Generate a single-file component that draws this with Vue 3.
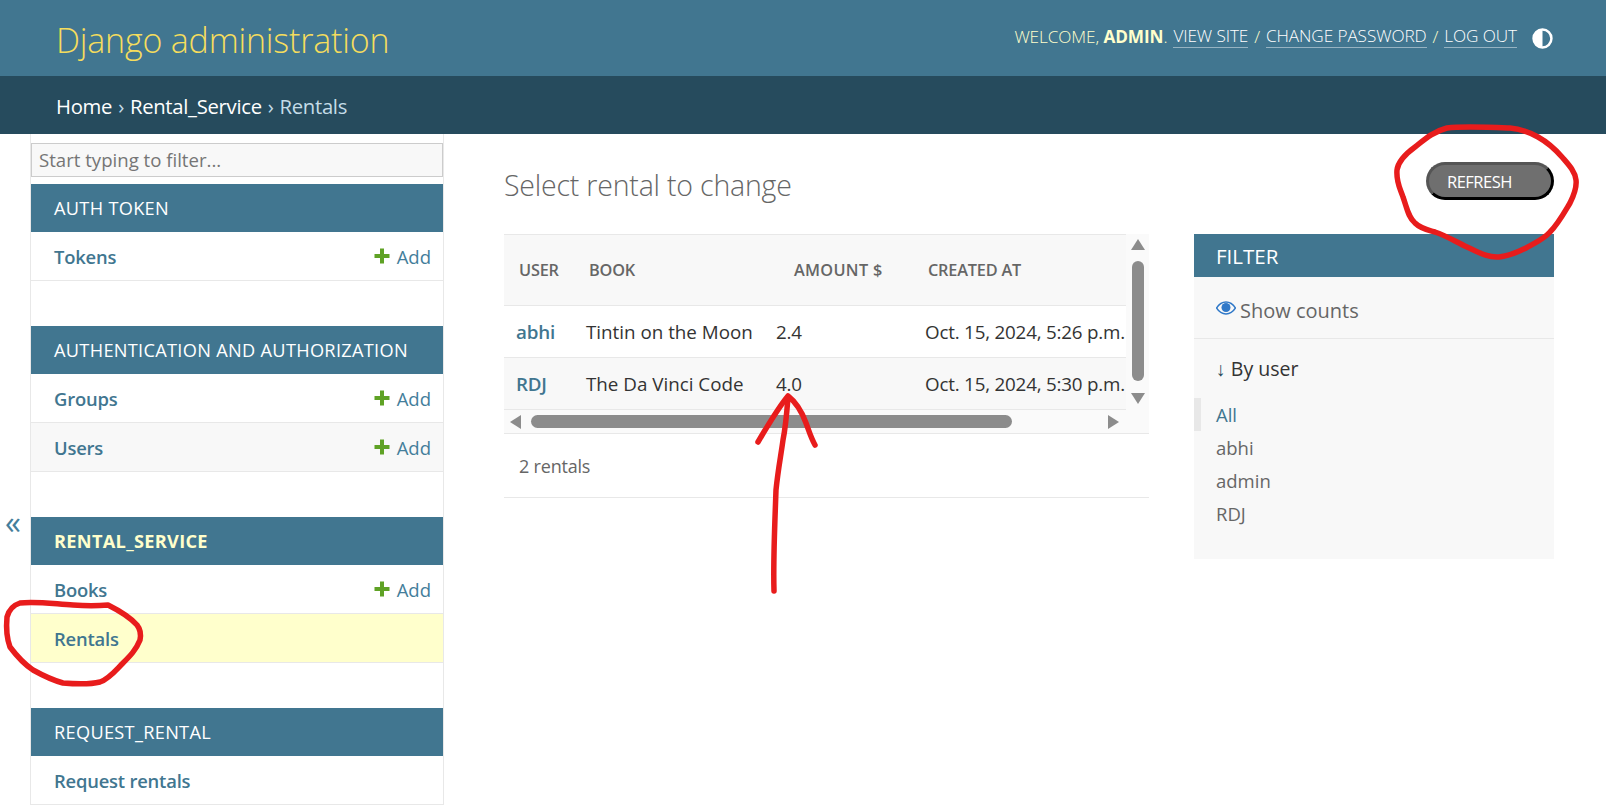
<template>
  <div class="page">
    <header class="header">
      <h1 class="brand">Django administration</h1>
      <div class="tools">
        <span class="welcome">Welcome, <strong>admin</strong>.</span>
        <a class="tool-link">View site</a>
        <span>/</span>
        <a class="tool-link">Change password</a>
        <span>/</span>
        <a class="tool-link">Log out</a>
        <svg class="theme" viewBox="0 0 20 20" width="21" height="21">
          <circle cx="10" cy="10" r="8.5" fill="none" stroke="#fff" stroke-width="2.4" />
          <path d="M10 2a8 8 0 0 0 0 16z" fill="#fff" />
        </svg>
      </div>
    </header>
    <div class="crumbs">
      <a>Home</a><span class="sep">›</span><a>Rental_Service</a><span class="sep">›</span><span class="current">Rentals</span>
    </div>

    <div class="body">
      <div class="toggle-col"><span class="toggle">«</span></div>
      <aside class="sidebar">
        <div class="filter-box">Start typing to filter...</div>
        <section v-for="app in apps" :key="app.name" class="app">
          <div class="app-title" :class="{ active: app.active }">{{ app.name }}</div>
          <div v-for="row in app.rows" :key="row.name" class="app-row" :class="{ selected: row.selected }">
            <a class="row-name">{{ row.name }}</a>
            <a v-if="row.add" class="add">
              <svg viewBox="0 0 16 16" width="16" height="16">
                <path d="M6 0.5h4v5.5h5.5v4H10v5.5H6V10H0.5V6H6z" fill="#5fa225" />
              </svg>
              Add
            </a>
          </div>
        </section>
      </aside>

      <main class="content">
        <div class="title-row">
          <h2 class="title">Select rental to change</h2>
          <button class="refresh">REFRESH</button>
        </div>
        <div class="columns">
          <div class="results">
            <div class="table-wrap">
              <div class="table">
                <div class="table-row head">
                  <div v-for="h in heads" :key="h" class="th" :class="{ amount: h === 'AMOUNT $' }">{{ h }}</div>
                </div>
                <div v-for="(r, i) in rentals" :key="r.user" class="table-row item" :class="{ alt: i === 1 }">
                  <div class="td"><a class="user-link">{{ r.user }}</a></div>
                  <div class="td book">{{ r.book }}</div>
                  <div class="td">{{ r.amount }}</div>
                  <div class="td">{{ r.created }}</div>
                </div>
              </div>
              <div class="vbar">
                <i class="tri up"></i>
                <i class="vthumb"></i>
                <i class="tri down"></i>
              </div>
              <div class="hbar">
                <i class="tri left"></i>
                <i class="hthumb"></i>
                <i class="tri right"></i>
              </div>
            </div>
            <div class="paginator">2 rentals</div>
          </div>

          <div class="filter">
            <div class="filter-head">FILTER</div>
            <div class="counts">
              <svg viewBox="0 0 20 14" width="20" height="14">
                <path d="M0.5 7C3 3 6.2 1 10 1s7 2 9.5 6c-2.5 4-5.700 6-9.500 6S3 11 0.5 7z" fill="none" stroke="#2f78c8" stroke-width="1.500" />
                <circle cx="10" cy="6.500" r="4.500" fill="#2f78c8" />
              </svg>
              <span>Show counts</span>
            </div>
            <div class="by-user"><span class="down">↓</span> By user</div>
            <div v-for="f in filters" :key="f" class="filter-item" :class="{ on: f === 'All' }">{{ f }}</div>
          </div>
        </div>
      </main>
    </div>

    <!-- hand drawn red marks on the screenshot -->
    <svg class="marks" width="1606" height="805" viewBox="0 0 1606 805" fill="none">
      <path d="M1510 128C1485 127 1462 126 1447 128C1432 132 1424 140 1415 147C1404 155 1398 162 1397 170C1396 182 1400 188 1403 197C1407 208 1408 217 1415 223C1421 229 1428 230 1435 232C1447 236 1456 242 1467 247C1478 252 1488 258 1499 257C1509 256 1518 252 1526 248C1535 243 1544 239 1550 232C1558 224 1564 213 1570 203C1574 195 1577 188 1576 180C1575 171 1568 164 1562 157C1555 149 1547 142 1538 137C1529 132 1520 129 1510 128Z" />
      <path d="M108 605C118 610 129 616 137 625C141 630 141 635 140 640C136 650 130 656 123 663C116 670 109 679 100 682C88 685 75 684 63 683C52 680 42 675 33 670C24 664 16 655 10 647C7 639 6 628 7 617C9 609 14 605 20 603C35 601 55 604 73 605C85 606 98 606 108 605Z" />
      <path d="M774 591C773 560 775 520 776 490C778 470 781 455 783 440C786 425 787 410 788 397" />
      <path d="M758 442C768 425 778 408 788 396C797 403 802 412 806 423C809 431 811 438 815 445" />
    </svg>
  </div>
</template>

<script setup>
const apps = [
  { name: 'AUTH TOKEN', rows: [{ name: 'Tokens', add: true }] },
  {
    name: 'AUTHENTICATION AND AUTHORIZATION',
    rows: [{ name: 'Groups', add: true }, { name: 'Users', add: true }]
  },
  {
    name: 'RENTAL_SERVICE',
    active: true,
    rows: [{ name: 'Books', add: true }, { name: 'Rentals', selected: true }]
  },
  { name: 'REQUEST_RENTAL', rows: [{ name: 'Request rentals' }] }
]

const heads = ['USER', 'BOOK', 'AMOUNT $', 'CREATED AT']

const rentals = [
  { user: 'abhi', book: 'Tintin on the Moon', amount: '2.4', created: 'Oct. 15, 2024, 5:26 p.m.' },
  { user: 'RDJ', book: 'The Da Vinci Code', amount: '4.0', created: 'Oct. 15, 2024, 5:30 p.m.' }
]

const filters = ['All', 'abhi', 'admin', 'RDJ']
</script>

<style>
html,
body {
  margin: 0;
  background: #fff;
  overflow: hidden;
}
</style>

<style scoped>
.page {
  position: relative;
  width: 1606px;
  height: 805px;
  overflow: hidden;
  font-family: 'Open Sans', 'Noto Sans', sans-serif;
  font-size: 18.5px;
  color: #333;
}

.header {
  height: 76px;
  background: #417690;
  display: flex;
  align-items: center;
  justify-content: space-between;
  padding: 0 53px 0 56px;
}

.brand {
  margin: 3px 0 0;
  font-size: 34px;
  font-weight: 300;
  color: #f5dd5d;
  letter-spacing: -0.2px;
}

.tools {
  display: flex;
  align-items: center;
  gap: 6px;
  font-size: 17.2px;
  font-weight: 300;
  color: #ffc;
  text-transform: uppercase;
  letter-spacing: -0.1px;
  margin-top: -4px;
}

.tools strong {
  font-weight: 700;
}

.tool-link {
  color: #fff;
  border-bottom: 1px solid rgba(255, 255, 255, 0.45);
}

.theme {
  margin-left: 9px;
  margin-top: 4px;
}

.crumbs {
  height: 58px;
  background: #264b5d;
  display: flex;
  align-items: center;
  padding: 2px 0 0 56px;
  box-sizing: border-box;
  color: #fff;
  font-size: 20.3px;
  letter-spacing: -0.3px;
}

.sep {
  margin: 0 6px;
  color: #c4dce8;
}

.current {
  color: #c4dce8;
}

.body {
  display: flex;
  height: 671px;
}

.toggle-col {
  width: 30px;
  flex: none;
  padding-top: 370px;
  text-align: center;
}

.toggle {
  color: #447e9b;
  font-size: 32px;
  line-height: 36px;
  margin-left: -4px;
  display: block;
}

.sidebar {
  flex: none;
  height: 671px;
  width: 414px;
  border-left: 1px solid #e8e8e8;
  border-right: 1px solid #e8e8e8;
  padding-top: 9px;
  box-sizing: border-box;
}

.filter-box {
  height: 34px;
  box-sizing: border-box;
  border: 1px solid #ccc;
  background: #f8f8f8;
  color: #757575;
  padding-left: 7px;
  line-height: 32px;
  font-size: 18.6px;
  margin-bottom: 7px;
}

.app {
  margin-bottom: 45px;
}

.app-title {
  height: 48px;
  background: #417690;
  color: #fff;
  display: flex;
  align-items: center;
  padding-left: 23px;
  font-size: 18.2px;
  font-weight: 400;
  letter-spacing: 0.3px;
}

.app-title.active {
  color: #ffc;
  font-weight: 700;
}

.app-row {
  height: 49px;
  box-sizing: border-box;
  display: flex;
  align-items: center;
  justify-content: space-between;
  padding: 0 12px 0 23px;
  border-bottom: 1px solid #e8e8e8;
  background: #fff;
}

.app-row + .app-row {
  background: #f8f8f8;
}

.app-row.selected {
  background: #ffc;
}

.row-name {
  color: #417690;
  font-weight: 600;
  font-size: 18.4px;
  letter-spacing: -0.2px;
}

.add {
  display: flex;
  align-items: center;
  gap: 7px;
  color: #447e9b;
  font-size: 18.5px;
}

.content {
  flex: 1;
  padding: 0 52px 0 60px;
  min-width: 0;
}

.title-row {
  height: 100px;
  display: flex;
  justify-content: space-between;
  padding-top: 28px;
  box-sizing: border-box;
}

.title {
  margin: 3px 0 0;
  font-size: 28.5px;
  line-height: 40px;
  font-weight: 300;
  color: #666;
  letter-spacing: -0.2px;
}

.refresh {
  width: 128px;
  height: 38px;
  border-radius: 19px;
  border-width: 3px;
  border-style: solid;
  border-color: #555 #000 #000 #555;
  background: #6f6f6f;
  color: #fff;
  font-family: inherit;
  font-size: 16.5px;
  text-align: left;
  padding: 0 0 0 18px;
  letter-spacing: -0.5px;
}

.columns {
  display: flex;
  justify-content: space-between;
}

.results {
  width: 645px;
}

.table-wrap {
  display: grid;
  grid-template-columns: 622px 23px;
  grid-template-rows: 176px 24px;
  background: #fafafa;
}

.table {
  background: #fff;
}

.table-row {
  display: grid;
  grid-template-columns: 70px 190px 149px 213px;
  align-items: center;
  box-sizing: border-box;
  border-bottom: 1px solid #e8e8e8;
}

.head {
  height: 72px;
  background: #f8f8f8;
  border-top: 1px solid #e8e8e8;
}

.th {
  padding-left: 15px;
  font-size: 16.3px;
  font-weight: 600;
  color: #666;
  letter-spacing: -0.2px;
  white-space: nowrap;
}

.th.amount {
  padding-left: 30px;
  letter-spacing: 0.3px;
}

.item {
  height: 52px;
}

.item.alt {
  background: #f8f8f8;
}

.td {
  padding-left: 12px;
  font-size: 18.8px;
  letter-spacing: -0.2px;
  white-space: nowrap;
}

.td.book {
  letter-spacing: 0;
}

.user-link {
  color: #417690;
  font-weight: 600;
}

.vbar {
  display: flex;
  flex-direction: column;
  align-items: center;
  padding-top: 5px;
  box-sizing: border-box;
}

.vthumb {
  width: 12px;
  height: 120px;
  border-radius: 6px;
  background: #8c8c8c;
  margin: 11px 0 12px;
}

.hbar {
  display: flex;
  align-items: center;
  padding: 0 6px;
  grid-column: 1 / 3;
  border-bottom: 1px solid #e8e8e8;
}

.hthumb {
  width: 481px;
  height: 13px;
  border-radius: 7px;
  background: #8c8c8c;
  margin-left: 10px;
}

.tri {
  display: block;
  width: 0;
  height: 0;
  border-style: solid;
  border-color: transparent;
}

.tri.up {
  border-width: 0 7.5px 11px;
  border-bottom-color: #8c8c8c;
}

.tri.down {
  border-width: 11px 7.5px 0;
  border-top-color: #8c8c8c;
}

.tri.left {
  border-width: 7.5px 11px 7.5px 0;
  border-right-color: #8c8c8c;
}

.tri.right {
  border-width: 7.5px 0 7.5px 11px;
  border-left-color: #8c8c8c;
  margin-left: 96px;
}

.paginator {
  height: 64px;
  box-sizing: border-box;
  display: flex;
  align-items: center;
  padding-left: 15px;
  color: #666;
  font-size: 18px;
  letter-spacing: -0.2px;
  border-bottom: 1px solid #e8e8e8;
}

.filter {
  width: 360px;
  height: 325px;
  background: #f8f8f8;
  flex: none;
}

.filter-head {
  height: 43px;
  background: #417690;
  color: #fff;
  display: flex;
  align-items: center;
  padding-left: 22px;
  font-size: 20.5px;
}

.counts {
  height: 62px;
  box-sizing: border-box;
  display: flex;
  align-items: center;
  gap: 4px;
  padding: 5px 0 0 22px;
  border-bottom: 1px solid #e8e8e8;
  color: #666;
  font-size: 20px;
}

.counts svg {
  margin-top: -4px;
}

.by-user {
  height: 59px;
  display: flex;
  align-items: center;
  padding-left: 22px;
  font-size: 19.5px;
  white-space: pre;
}

.down {
  color: #264b5d;
}

.filter-item {
  height: 33px;
  display: flex;
  align-items: center;
  padding-left: 15px;
  border-left: 7px solid transparent;
  color: #666;
  font-size: 18.5px;
}

.filter-item.on {
  border-left-color: #e8e8e8;
  color: #417690;
}

.marks {
  position: absolute;
  left: 0;
  top: 0;
  pointer-events: none;
}

.marks path {
  stroke: #e81c1c;
  stroke-width: 5.5;
  stroke-linecap: round;
  stroke-linejoin: round;
}
</style>
